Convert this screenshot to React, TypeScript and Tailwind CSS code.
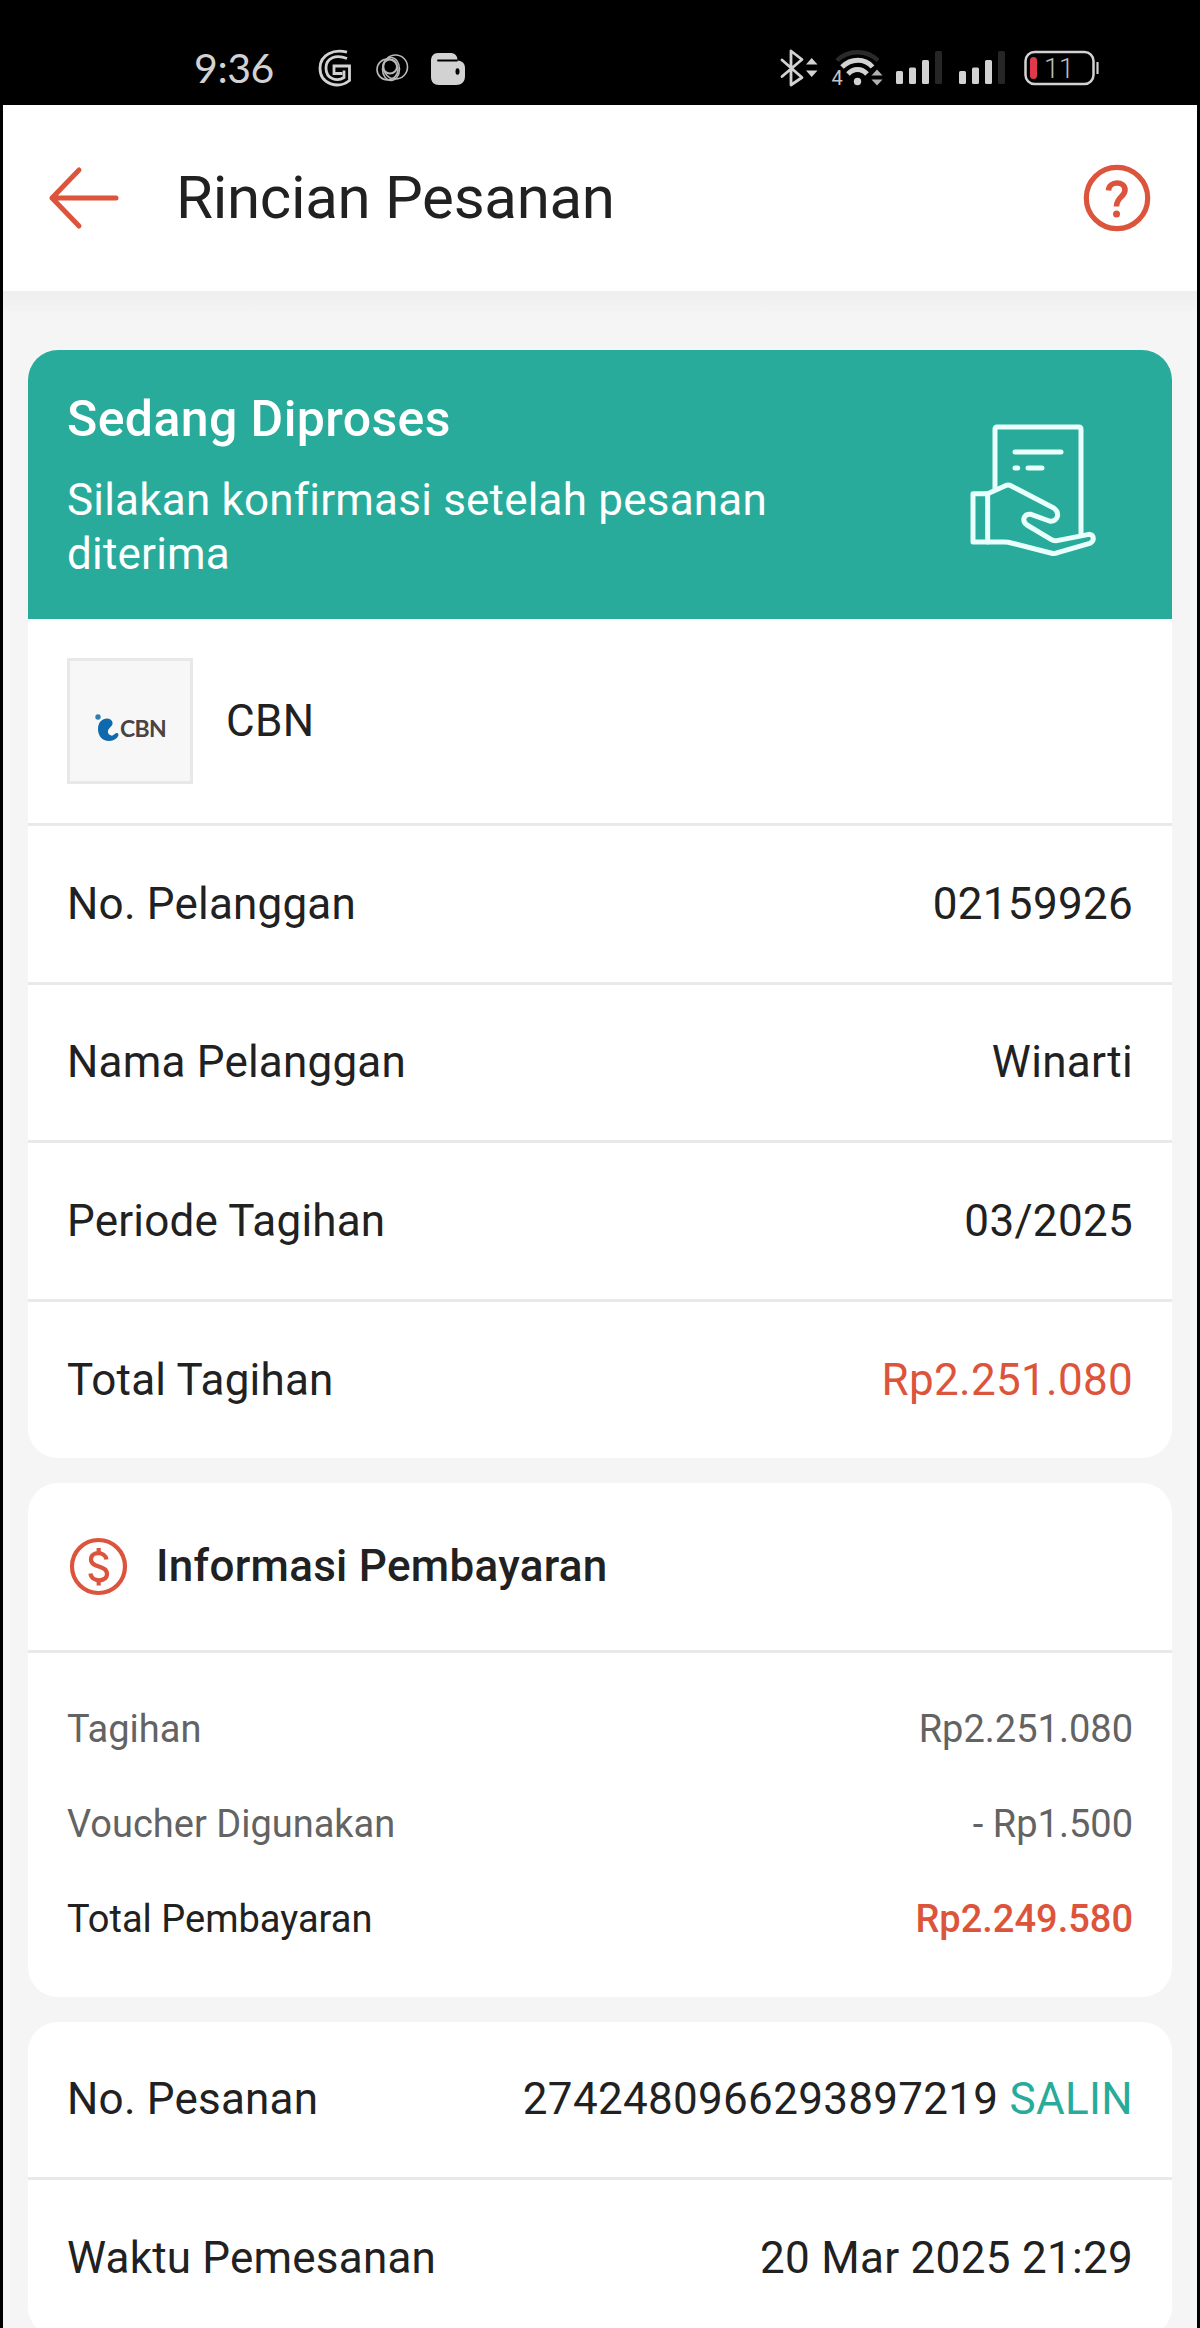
import type { ReactNode } from "react";

const Row = ({ label, last, children }: { label: string; last?: boolean; children: ReactNode }) => (
  <div
    className={`flex justify-between items-center px-[39px] text-[44px] leading-[52px] ${
      last ? "h-[156.5px]" : "h-[158.5px] border-b-[3px] border-[#e9e9e9]"
    }`}
  >
    <span className="tracking-[0.2px]">{label}</span>
    <span className="tracking-[0.3px]">{children}</span>
  </div>
);

const SignalIcon = () => (
  <svg className="w-[48px] h-[36px]" viewBox="0 0 48 36">
    <rect x="1" y="22" width="7" height="13" rx="1.5" fill="#d2d2d2" />
    <rect x="14" y="18.500" width="7" height="16.500" rx="1.5" fill="#d2d2d2" />
    <rect x="27" y="11" width="7" height="24" rx="1.5" fill="#d2d2d2" />
    <rect x="40" y="2" width="7" height="33" rx="1.5" fill="#262626" />
  </svg>
);

const StatusBar = () => (
  <div className="flex h-[105px] items-start pt-[49px] pl-[194px] pr-[100px] text-[#d2d2d2]">
    <span className="w-[124px] font-['Lato',sans-serif] text-[41px] leading-[38px] tracking-[-0.4px]">9:36</span>
    {/* Google */}
    <svg className="w-[34px] h-[38px]" viewBox="0 0 34 38" fill="none" stroke="#d2d2d2" strokeWidth="2.800">
      <path d="M29 3.200C16 -0.500 2 5.500 2 19C2 36 21 40 31.500 31.500V17H16V24.500H24.500" />
      <path d="M29 9.500C18 5 8 9 8 19C8 31 20 32.500 26 28.500V21.500" />
    </svg>
    <svg className="ml-[23px] w-[34px] h-[38px]" viewBox="0 0 34 38" fill="none" stroke="#b8b8b8" strokeWidth="1.600">
      <circle cx="20.500" cy="18" r="12" />
      <circle cx="15" cy="17.500" r="7" strokeWidth="2" />
      <ellipse cx="12.500" cy="20.500" rx="10.500" ry="10.500" />
      <ellipse cx="16" cy="20" rx="8.500" ry="11.500" />
    </svg>
    {/* Dompet */}
    <svg className="ml-[21px] w-[36px] h-[38px]" viewBox="0 0 36 38">
      <path
        d="M8 4H20C25 4 27.500 6.500 27.500 11.500C32.500 12 35 14.500 35 19V27C35 33 31.500 36 26 36H9C4 36 1 33 1 28V12C1 7 3.500 4 8 4Z"
        fill="#d2d2d2"
      />
      <path d="M8 11.500H27" stroke="#000" strokeWidth="1.800" strokeLinecap="round" />
      <ellipse cx="27.500" cy="22.500" rx="2" ry="3.200" fill="#000" />
    </svg>

    <svg className="ml-auto w-[39px] h-[38px]" viewBox="0 0 39 38">
      <path
        d="M2 11L22 28.500L11 36V2L22 10.500L2 27.500"
        fill="none"
        stroke="#d2d2d2"
        strokeWidth="2.800"
        strokeLinejoin="round"
        strokeLinecap="round"
      />
      <path d="M26 15.500H37.500L31.700 9ZM26 21.500H37.500L31.700 28Z" fill="#d2d2d2" />
    </svg>
    <svg className="ml-[12px] w-[54px] h-[46px]" viewBox="0 0 54 46" fill="none">
      <path d="M6 11.500C17 0.500 36 0.500 47 11.500" stroke="#2a2a2a" strokeWidth="4.500" />
      <path d="M11 18C20 9 34 9 41.500 18" stroke="#d2d2d2" strokeWidth="5" />
      <path d="M17 25C22.500 19 30.500 19 36 25" stroke="#d2d2d2" strokeWidth="5" />
      <circle cx="26.500" cy="32.500" r="3.700" fill="#d2d2d2" />
      <path d="M40.500 26.500H51.500L46 20.500ZM40.500 30.500H51.500L46 36.500Z" fill="#b0b0b0" />
      <text x="0.500" y="35.500" fontSize="20" fontFamily="Roboto, sans-serif" fill="#c4c4c4">
        4
      </text>
    </svg>
    <div className="ml-[10px] flex gap-[15px]">
      <SignalIcon />
      <SignalIcon />
    </div>
    <svg className="ml-[18px] w-[76px] h-[38px]" viewBox="0 0 76 38">
      <rect x="1.500" y="3" width="68" height="32" rx="9" fill="none" stroke="#d2d2d2" strokeWidth="2.500" />
      <rect x="6" y="8" width="7" height="22" rx="3.500" fill="#e0394b" />
      <path d="M73.500 13V25" stroke="#d2d2d2" strokeWidth="2.200" />
      <text x="35" y="28.500" fontSize="27" textAnchor="middle" fontFamily="Roboto, sans-serif" fontWeight="300" fill="#c0c0c0">
        11
      </text>
    </svg>
  </div>
);

const Header = () => (
  <div className="flex h-[186px] items-center bg-white pl-[45px] pr-[46px]">
    <svg className="w-[72px] h-[64px]" viewBox="0 0 72 64" fill="none" stroke="#dc543b" strokeWidth="5" strokeLinecap="round" strokeLinejoin="round">
      <path d="M68 32H4M31 4L4 32L31 60" />
    </svg>
    <h1 className="ml-[56px] text-[60px] leading-[70px] tracking-[-0.3px]">Rincian Pesanan</h1>
    <svg className="ml-auto w-[68px] h-[68px]" viewBox="0 0 68 68" fill="none" stroke="#dc543b" strokeWidth="5.200">
      <circle cx="34" cy="34" r="30.700" />
      <path d="M25.500 26.500C26 16.500 42 16.500 42 26C42 33 33.500 33 33.500 42.500" strokeWidth="5.600" />
      <circle cx="33.500" cy="50" r="3.500" fill="#dc543b" stroke="none" />
    </svg>
  </div>
);

const StatusBanner = () => (
  <div className="flex h-[269px] items-start justify-between bg-[#28ab9b] pl-[39px] pr-[76px] text-white">
    <div className="w-[760px] pt-[39px]">
      <h2 className="text-[50px] leading-[60px] font-medium tracking-[0.4px]">Sedang Diproses</h2>
      <p className="mt-[24px] text-[44px] leading-[54px] tracking-[0.2px]">Silakan konfirmasi setelah pesanan diterima</p>
    </div>
    {/* Tangan memegang struk */}
    <svg
      className="mt-[73px] w-[126px] h-[133px]"
      viewBox="150 99 378 399"
      fill="none"
      stroke="#e8fffb"
      strokeWidth="15"
      strokeLinejoin="round"
      strokeLinecap="round"
    >
      <path d="M225 295V118Q225 111 232 111H476Q483 111 483 118V432" />
      <path d="M285 186H423M285 234H293M324 234H366" />
      <path d="M203 311H159V456H203Z" />
      <path d="M203 311L256 287Q265 283 274 288L401 354Q416 364 412 380Q406 396 388 393L333 373Q317 371 312 384Q309 396 321 405L393 448Q401 454 411 452L507 433Q520 434 520 447Q519 456 509 460L413 488Q403 492 392 489L274 459Q264 456 254 456H203" />
    </svg>
  </div>
);

const Merchant = () => (
  <div className="flex h-[207px] items-center border-b-[3px] border-[#e9e9e9] px-[39px]">
    <div className="flex h-[126px] w-[126px] items-center border-[3px] border-[#e8e8e8] bg-[#f7f7f7] pl-[25px] pt-[14px]">
      <svg className="w-[25px] h-[28px]" viewBox="0 0 25 28">
        <circle cx="3" cy="3" r="2.700" fill="#2f7fae" />
        <path
          d="M3 15C3 8 7.500 4.500 12 4.500C17.500 4.500 19.500 10 15.500 13C12 16 12 20 16 21.500C19 22.500 20 17.500 23 19.500C25 22 20 27 14 27C7 27 3 21.500 3 15Z"
          fill="#0f69ad"
        />
      </svg>
      <span className="font-['Lato',sans-serif] text-[23px] leading-[28px] font-bold tracking-[-0.7px] text-[#4a4345]">CBN</span>
    </div>
    <span className="ml-[33px] text-[44px] leading-[52px] tracking-[0.3px]">CBN</span>
  </div>
);

const App = () => {
  return (
    <div className="h-[2328px] w-[1200px] overflow-hidden bg-black px-[3px] font-['Roboto',sans-serif] text-[#212121]">
      <div className="-mx-[3px]">
        <StatusBar />
      </div>
      <div className="h-[2223px] bg-[#f5f5f5]">
        <Header />
        <div className="h-5 bg-linear-to-b from-[#efefef] to-[#f3f3f3]" />

        <div className="flex flex-col gap-[24.5px] px-[25px] pt-[39px]">
          <div className="overflow-hidden rounded-[30px] bg-white">
            <StatusBanner />
            <Merchant />
            <Row label="No. Pelanggan">02159926</Row>
            <Row label="Nama Pelanggan">Winarti</Row>
            <Row label="Periode Tagihan">03/2025</Row>
            <Row label="Total Tagihan" last>
              <span className="text-[#dc543b]">Rp2.251.080</span>
            </Row>
          </div>

          <div className="h-[514.5px] rounded-[30px] bg-white">
            <div className="flex h-[170px] items-center border-b-[3px] border-[#e9e9e9] px-[41px]">
              <svg className="w-[59px] h-[59px]" viewBox="0 0 59 59" fill="none" stroke="#dc543b" strokeWidth="4.200">
                <circle cx="29.500" cy="29.500" r="26.500" />
                <path d="M37.500 22.500C36 14 22 14 22 22.500C22 31.500 38 27.500 38 37C38 45.500 22.500 45.500 21.500 36.500M29.700 11V16M29.700 43.500V48.500" />
              </svg>
              <span className="ml-[28px] text-[44px] leading-[52px] font-medium tracking-[0.3px]">Informasi Pembayaran</span>
            </div>
            <div className="flex flex-col gap-[51.300px] px-[39px] pt-[54px] text-[38px] leading-[44px] text-[#636363]">
              <div className="flex justify-between">
                <span>Tagihan</span>
                <span>Rp2.251.080</span>
              </div>
              <div className="flex justify-between">
                <span>Voucher Digunakan</span>
                <span>- Rp1.500</span>
              </div>
              <div className="flex justify-between text-[#212121]">
                <span>Total Pembayaran</span>
                <span className="font-medium text-[#dc543b]">Rp2.249.580</span>
              </div>
            </div>
          </div>

          <div className="overflow-hidden rounded-[30px] bg-white">
            <Row label="No. Pesanan">
              2742480966293897219 <span className="text-[#28ab9b]">SALIN</span>
            </Row>
            <Row label="Waktu Pemesanan" last>
              20 Mar 2025 21:29
            </Row>
          </div>
        </div>
      </div>
    </div>
  );
};

export default App;
